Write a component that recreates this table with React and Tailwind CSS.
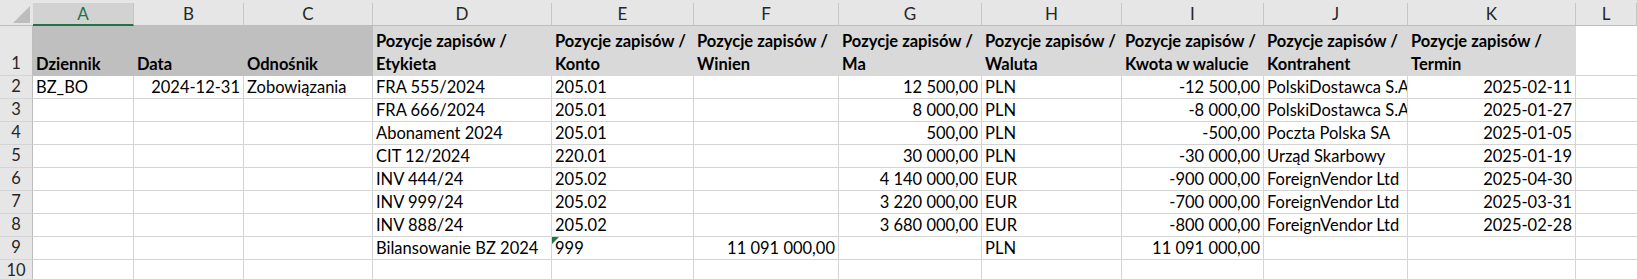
import React from "react";

// Excel-like sheet: columns A–L, rows 1–10

const LETTERS = ["A", "B", "C", "D", "E", "F", "G", "H", "I", "J", "K", "L"];
const RIGHT = [1, 5, 6, 8, 10];

const HEAD = [
  ["", "Dziennik"],
  ["", "Data"],
  ["", "Odnośnik"],
  ["Pozycje zapisów /", "Etykieta"],
  ["Pozycje zapisów /", "Konto"],
  ["Pozycje zapisów /", "Winien"],
  ["Pozycje zapisów /", "Ma"],
  ["Pozycje zapisów /", "Waluta"],
  ["Pozycje zapisów /", "Kwota w walucie"],
  ["Pozycje zapisów /", "Kontrahent"],
  ["Pozycje zapisów /", "Termin"],
];

const ROWS = [
  ["BZ_BO", "2024-12-31", "Zobowiązania", "FRA 555/2024", "205.01", "", "12 500,00", "PLN", "-12 500,00", "PolskiDostawca S.A.", "2025-02-11"],
  ["", "", "", "FRA 666/2024", "205.01", "", "8 000,00", "PLN", "-8 000,00", "PolskiDostawca S.A.", "2025-01-27"],
  ["", "", "", "Abonament 2024", "205.01", "", "500,00", "PLN", "-500,00", "Poczta Polska SA", "2025-01-05"],
  ["", "", "", "CIT 12/2024", "220.01", "", "30 000,00", "PLN", "-30 000,00", "Urząd Skarbowy", "2025-01-19"],
  ["", "", "", "INV 444/24", "205.02", "", "4 140 000,00", "EUR", "-900 000,00", "ForeignVendor Ltd", "2025-04-30"],
  ["", "", "", "INV 999/24", "205.02", "", "3 220 000,00", "EUR", "-700 000,00", "ForeignVendor Ltd", "2025-03-31"],
  ["", "", "", "INV 888/24", "205.02", "", "3 680 000,00", "EUR", "-800 000,00", "ForeignVendor Ltd", "2025-02-28"],
  ["", "", "", "Bilansowanie BZ 2024", "999", "11 091 000,00", "", "PLN", "11 091 000,00", "", ""],
  ["", "", "", "", "", "", "", "", "", "", ""],
];

function RowNum({ n, tall }) {
  return (
    <div
      className={`flex items-end justify-center border-r border-b border-r-[#bdbdbd] border-b-[#d4d4d4] bg-[#e6e6e6] text-[16.5px] leading-[23px] text-[#262626] ${
        tall ? "h-[50px]" : "h-[23px]"
      }`}
    >
      {n}
    </div>
  );
}

export default function App() {
  return (
    <div className="w-[1637px] h-[279px] overflow-hidden bg-white font-['Lato','Liberation_Sans',sans-serif] text-black">
      <div className="grid grid-cols-[33px_101px_110px_129px_179px_142px_145px_143px_140px_142px_144px_168px_1fr]">
        {/* ── Column letters ─────────────────────────────────────────── */}
        <div className="h-[26px] bg-[#e6e6e6] border-b border-[#bdbdbd] flex items-end justify-end pr-[3px] pb-[2px]">
          <svg width="17" height="17" viewBox="0 0 17 17">
            <polygon points="17,0 17,17 0,17" fill="#bdbdbd" />
          </svg>
        </div>
        {LETTERS.map((l, i) => (
          <div key={l} className="h-[26px] bg-[#e6e6e6] pt-[3px]">
            <div
              className={
                i === 0
                  ? "h-full flex items-center justify-center bg-[#d2d2d2] border-r border-[#c6c6c6] border-b-2 border-b-[#217346] text-[#217346] text-[17px]"
                  : "h-full flex items-center justify-center border-r border-[#c6c6c6] border-b border-b-[#bdbdbd] text-[#262626] text-[17px]"
              }
            >
              {l}
            </div>
          </div>
        ))}

        {/* ── Row 1: headers ─────────────────────────────────────────── */}
        <RowNum n={1} tall />
        {HEAD.map(([top, bottom], i) => (
          <div
            key={i}
            className={`h-[50px] flex flex-col justify-end px-[3px] font-bold text-[16.5px] leading-[23px] whitespace-nowrap overflow-hidden ${
              i < 3 ? "bg-[#bfbfbf]" : "bg-[#d9d9d9]"
            }`}
          >
            {top && <div>{top}</div>}
            <div>{bottom}</div>
          </div>
        ))}
        <div className="h-[50px] border-b border-[#d4d4d4]" />

        {/* ── Data rows ──────────────────────────────────────────────── */}
        {ROWS.map((row, r) => (
          <React.Fragment key={r}>
            <RowNum n={r + 2} />
            {row.map((v, c) => (
              <div
                key={c}
                className={`relative h-[23px] border-r border-b border-[#d4d4d4] px-[3px] text-[16.5px] leading-[22px] whitespace-nowrap overflow-hidden ${
                  RIGHT.includes(c) ? "text-right" : "text-left"
                }`}
              >
                {r === 7 && c === 4 && (
                  <svg className="absolute left-0 top-0" width="7" height="7" viewBox="0 0 7 7">
                    <polygon points="0,0 7,0 0,7" fill="#217346" />
                  </svg>
                )}
                {v}
              </div>
            ))}
            <div className="h-[23px] border-b border-[#d4d4d4]" />
          </React.Fragment>
        ))}
      </div>
    </div>
  );
}
